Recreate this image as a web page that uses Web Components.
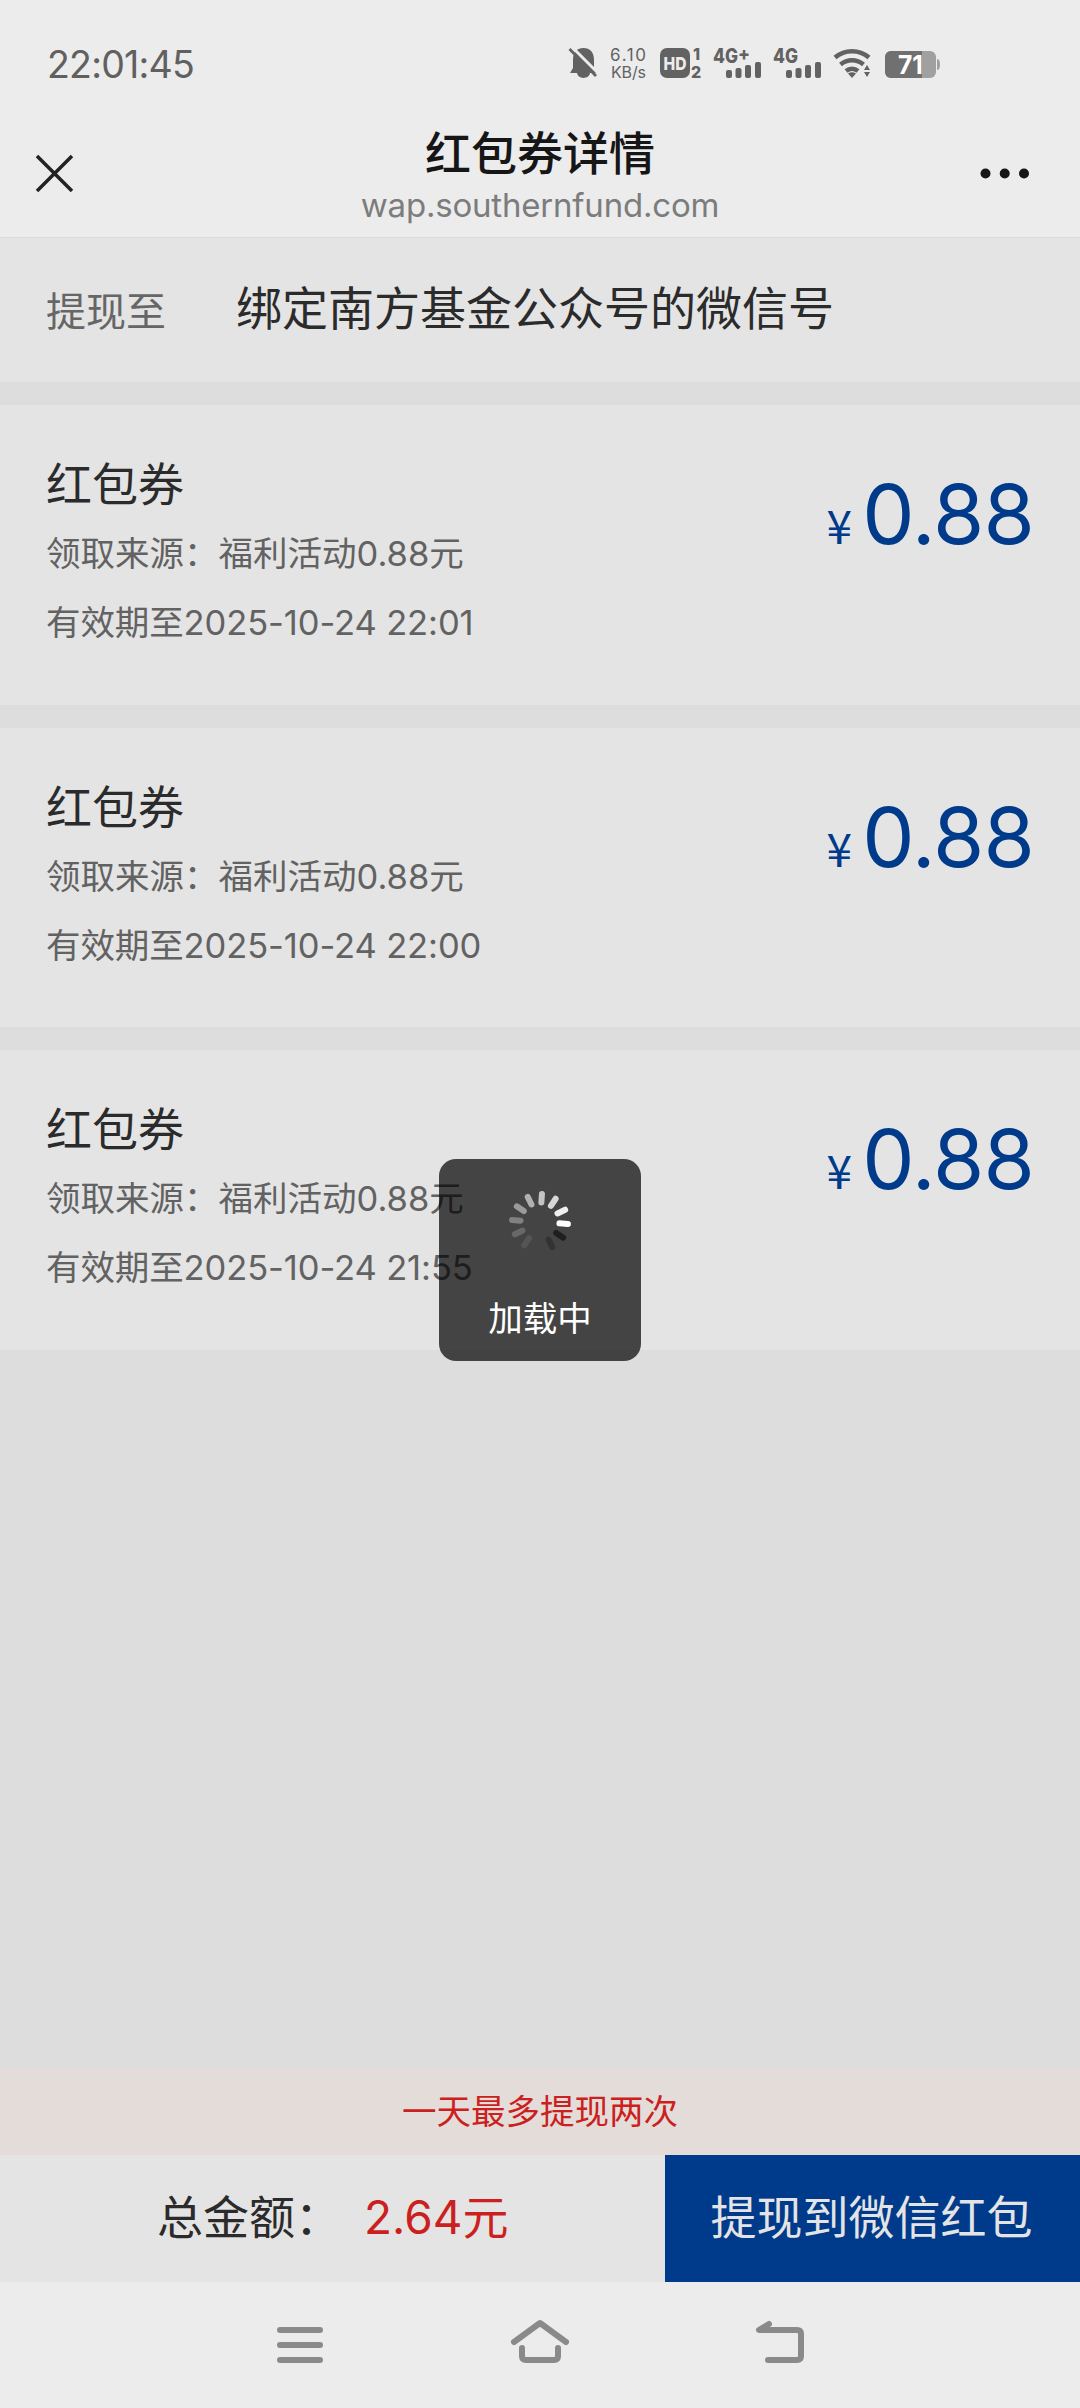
<!DOCTYPE html>
<html lang="zh-CN">
  <head>
    <meta charset="utf-8" />
    <meta name="viewport" content="width=device-width" />
    <title>红包券详情</title>
    <style>
      body {
        margin: 0;
        background: #ddd;
        color: #2b2b2b;
        font-family: Inter, "Noto Sans CJK SC", sans-serif;
      }
    </style>
  </head>
  <body>
    <coupon-app>
      <status-bar slot="top" time="22:01:45" speed="6.10" battery="71"></status-bar>
      <title-bar slot="top" host="wap.southernfund.com">红包券详情</title-bar>

      <account-row label="提现至">绑定南方基金公众号的微信号</account-row>
      <coupon-card source="福利活动0.88元" expires="2025-10-24 22:01" amount="0.88">红包券</coupon-card>
      <coupon-card source="福利活动0.88元" expires="2025-10-24 22:00" amount="0.88">红包券</coupon-card>
      <coupon-card source="福利活动0.88元" expires="2025-10-24 21:55" amount="0.88">红包券</coupon-card>

      <notice-strip slot="bottom">一天最多提现两次</notice-strip>
      <total-bar slot="bottom" label="总金额：" total="2.64元">提现到微信红包</total-bar>
      <nav-keys slot="bottom"></nav-keys>
      <loading-toast slot="toast">加载中</loading-toast>
    </coupon-app>

    <script>
      class BaseElement extends HTMLElement {
        constructor() {
          super();
          this._shadowRoot = this.attachShadow({ mode: "open" });
        }

        connectedCallback() {
          this._shadowRoot.innerHTML = this.render();
        }

        attr(name) {
          return this.getAttribute(name) || "";
        }
      }

      class CouponApp extends BaseElement {
        render() {
          return `
          <style>
            :host {
              display: flex;
              flex-direction: column;
              width: 1080px;
              height: 2408px;
              overflow: hidden;
              position: relative;
            }

            main {
              flex: 1;
              display: flex;
              flex-direction: column;
              gap: 23px;
            }
          </style>
          <slot name="top"></slot>
          <main><slot></slot></main>
          <slot name="bottom"></slot>
          <slot name="toast"></slot>
          `;
        }
      }

      class StatusBar extends BaseElement {
        render() {
          return `
          <style>
            :host {
              display: flex;
              align-items: center;
              justify-content: space-between;
              box-sizing: border-box;
              height: 130px;
              padding: 0 140px 4px 47px;
              background: #ececec;
              color: #606060;
            }

            time {
              padding-top: 3px;
              font-size: 37.500px;
              letter-spacing: -0.8px;
            }

            svg {
              display: block;
              width: 372px;
              height: 40px;
              font-family: Inter, sans-serif;
            }
          </style>
          <time>${this.attr("time")}</time>
          <svg viewBox="568 43 372 40" fill="#626262">
            <path d="M573 68V60c0-8 4-12 10.500-12s10.500 4 10.500 12v8l3 5H570z" />
            <path d="M577 73h13c-1 6.500-12 6.500-13 0z" />
            <path d="M571 46L599 74" stroke="#ececec" stroke-width="3" />
            <path d="M569.500 49L596 76" stroke="#626262" stroke-width="2.800" />
            <text x="610" y="61" font-size="17" textLength="36">${this.attr("speed")}</text>
            <text x="611" y="78" font-size="16" textLength="35">KB/s</text>
            <rect x="660" y="48" width="30" height="30" rx="7" />
            <text x="663.500" y="69.500" font-size="18" font-weight="800" fill="#ececec" textLength="23" lengthAdjust="spacingAndGlyphs">HD</text>
            <text x="693" y="60" font-size="16" font-weight="800">1</text>
            <text x="691" y="78" font-size="16" font-weight="800">2</text>
            <text x="713" y="62.500" font-size="20" font-weight="800" textLength="25" lengthAdjust="spacingAndGlyphs">4G</text>
            <text x="738" y="60" font-size="18" font-weight="800" textLength="12" lengthAdjust="spacingAndGlyphs">+</text>
            <g id="bars">
              <rect x="726" y="70" width="6" height="8" rx="2" />
              <rect x="735.500" y="68" width="6" height="10" rx="2" />
              <rect x="745" y="65" width="6" height="13" rx="2" />
              <rect x="755" y="62" width="6" height="16" rx="2" />
            </g>
            <text x="773" y="62.500" font-size="20" font-weight="800" textLength="25" lengthAdjust="spacingAndGlyphs">4G</text>
            <use href="#bars" x="60" />
            <g fill="none" stroke="#626262" stroke-width="4.500">
              <path d="M835 57.500a26 26 0 0 1 34 0" />
              <path d="M840.500 64.500a18 18 0 0 1 23 0" />
              <path d="M846 71a9.500 9.500 0 0 1 12 0" />
            </g>
            <path d="M848 73.500q4-2.500 8 0l-4 4.500z" />
            <path d="M864 70l3-5 3 5zM864 72h6l-3 5z" />
            <rect x="885" y="51" width="51" height="27" rx="6" fill="#a0a0a0" />
            <path d="M937 59q3 0 3 5.500t-3 5.500z" fill="#a0a0a0" />
            <path d="M922 51H891a6 6 0 0 0-6 6v15a6 6 0 0 0 6 6h31z" fill="#707070" />
            <text x="898" y="74" font-size="26" font-weight="700" fill="#fff" textLength="25" lengthAdjust="spacingAndGlyphs">${this.attr("battery")}</text>
          </svg>
          `;
        }
      }

      class TitleBar extends BaseElement {
        render() {
          return `
          <style>
            :host {
              display: grid;
              grid-template-columns: 120px 1fr 120px;
              align-items: start;
              box-sizing: border-box;
              height: 108px;
              background: #ececec;
              border-bottom: 1px solid #dcdcdc;
            }

            svg {
              display: block;
              margin-top: 13px;
            }

            .more {
              justify-self: end;
            }

            .heading {
              text-align: center;
            }

            h1 {
              margin: 0;
              color: #161616;
              font-size: 46px;
              font-weight: 500;
              line-height: 46px;
            }

            p {
              margin: 0;
              color: #7c7c7c;
              font-size: 33px;
              letter-spacing: -0.2px;
              line-height: 59px;
            }
          </style>
          <svg width="120" height="60" viewBox="0 143 120 60">
            <path d="M37 156L72 191M72 156L37 191" stroke="#222" stroke-width="3.500" />
          </svg>
          <div class="heading">
            <h1><slot></slot></h1>
            <p>${this.attr("host")}</p>
          </div>
          <svg class="more" width="120" height="60" viewBox="960 143 120 60" fill="#161616">
            <circle cx="985.500" cy="173.500" r="5" />
            <circle cx="1004.700" cy="173.500" r="5" />
            <circle cx="1024" cy="173.500" r="5" />
          </svg>
          `;
        }
      }

      class AccountRow extends BaseElement {
        render() {
          return `
          <style>
            :host {
              display: flex;
              align-items: center;
              box-sizing: border-box;
              height: 144px;
              padding-left: 46px;
              background: #e4e4e4;
            }

            .label {
              width: 190px;
              padding-bottom: 3px;
              color: #666;
              font-size: 40px;
            }

            .value {
              font-size: 46px;
              line-height: 60px;
              padding-bottom: 4px;
            }
          </style>
          <span class="label">${this.attr("label")}</span>
          <span class="value"><slot></slot></span>
          `;
        }
      }

      class CouponCard extends BaseElement {
        render() {
          return `
          <style>
            :host {
              display: flex;
              justify-content: space-between;
              box-sizing: border-box;
              height: 299.700px;
              padding: 45px 46px 0;
              background: #e4e4e4;
            }

            h2 {
              margin: 0;
              font-size: 46px;
              font-weight: 400;
              line-height: 69px;
            }

            p {
              margin: 0;
              color: #626262;
              font-size: 34.500px;
              line-height: 69px;
            }

            .date {
              letter-spacing: -0.1px;
            }

            .amount {
              color: #003a8a;
              line-height: 128px;
              font-size: 83px;
              letter-spacing: -0.8px;
              white-space: nowrap;
            }

            .amount small {
              margin-right: 11px;
              font-family: "Noto Sans CJK SC", sans-serif;
              font-size: 46px;
              line-height: 1;
            }
          </style>
          <div>
            <h2><slot></slot></h2>
            <p>领取来源：${this.attr("source")}</p>
            <p class="date">有效期至${this.attr("expires")}</p>
          </div>
          <div class="amount"><small>¥</small>${this.attr("amount")}</div>
          `;
        }
      }

      class NoticeStrip extends BaseElement {
        render() {
          return `
          <style>
            :host {
              display: block;
              height: 86px;
              background: #e4dcd9;
              color: #cb1f20;
              font-size: 34.500px;
              line-height: 86px;
              text-align: center;
            }
          </style>
          <slot></slot>
          `;
        }
      }

      class TotalBar extends BaseElement {
        render() {
          return `
          <style>
            :host {
              display: flex;
              height: 127px;
              background: #e4e4e4;
              font-size: 46px;
              line-height: 125px;
            }

            .sum {
              box-sizing: border-box;
              width: 665px;
              padding-left: 157px;
              white-space: nowrap;
            }

            .sum b {
              margin-left: 23px;
              color: #cb1f20;
              font-weight: 400;
            }

            button {
              flex: 1;
              border: 0;
              padding: 0 2px 2px 0;
              background: #003a8a;
              color: #e4e4e4;
              font: inherit;
            }
          </style>
          <div class="sum">${this.attr("label")}<b>${this.attr("total")}</b></div>
          <button><slot></slot></button>
          `;
        }
      }

      class NavKeys extends BaseElement {
        render() {
          return `
          <style>
            :host {
              display: flex;
              justify-content: center;
              gap: 180px;
              height: 126px;
              background: #ececec;
            }

            svg {
              display: block;
              width: 60px;
              height: 126px;
              fill: none;
              stroke: #8a8a8a;
              stroke-width: 6;
              stroke-linecap: round;
              stroke-linejoin: round;
            }
          </style>
          <svg viewBox="270 2282 60 126">
            <path d="M280 2330h40M280 2345h40M280 2360h40" />
          </svg>
          <svg viewBox="510 2282 60 126">
            <path d="M514 2342L540 2323L566 2342" />
            <path d="M522 2348v8q0 4 4 4h28q4 0 4-4v-8" />
          </svg>
          <svg viewBox="750 2282 60 126">
            <path d="M769 2324L759 2330H797q4 0 4 4v22q0 4-4 4H768" />
          </svg>
          `;
        }
      }

      class LoadingToast extends BaseElement {
        render() {
          // the petal at 3 o'clock is brightest, fading counterclockwise
          const petals = ["#fff", "#f0f0f0", "#d8d8d8", "#c4c4c4", "#b0b0b0", "#9a9a9a", "#808080", "#686868", "#555", null, "#333", "#1f1f1f"];
          const lines = petals
            .map((color, i) =>
              color ? `<path d="M19.500 0H28" stroke="${color}" transform="rotate(${4 - i * 30})" />` : ""
            )
            .join("");
          return `
          <style>
            :host {
              position: absolute;
              left: 439px;
              top: 1159px;
              display: flex;
              flex-direction: column;
              align-items: center;
              box-sizing: border-box;
              width: 202px;
              height: 202px;
              padding-top: 31px;
              border-radius: 17px;
              background: rgba(0, 0, 0, 0.7);
              color: #fff;
              font-size: 34.500px;
              line-height: 50px;
            }

            svg {
              display: block;
              margin-bottom: 40px;
              stroke-width: 6;
              stroke-linecap: round;
            }
          </style>
          <svg width="64" height="64" viewBox="-32 -32 64 64">${lines}</svg>
          <span><slot></slot></span>
          `;
        }
      }

      customElements.define("coupon-app", CouponApp);
      customElements.define("status-bar", StatusBar);
      customElements.define("title-bar", TitleBar);
      customElements.define("account-row", AccountRow);
      customElements.define("coupon-card", CouponCard);
      customElements.define("notice-strip", NoticeStrip);
      customElements.define("total-bar", TotalBar);
      customElements.define("nav-keys", NavKeys);
      customElements.define("loading-toast", LoadingToast);
    </script>
  </body>
</html>
